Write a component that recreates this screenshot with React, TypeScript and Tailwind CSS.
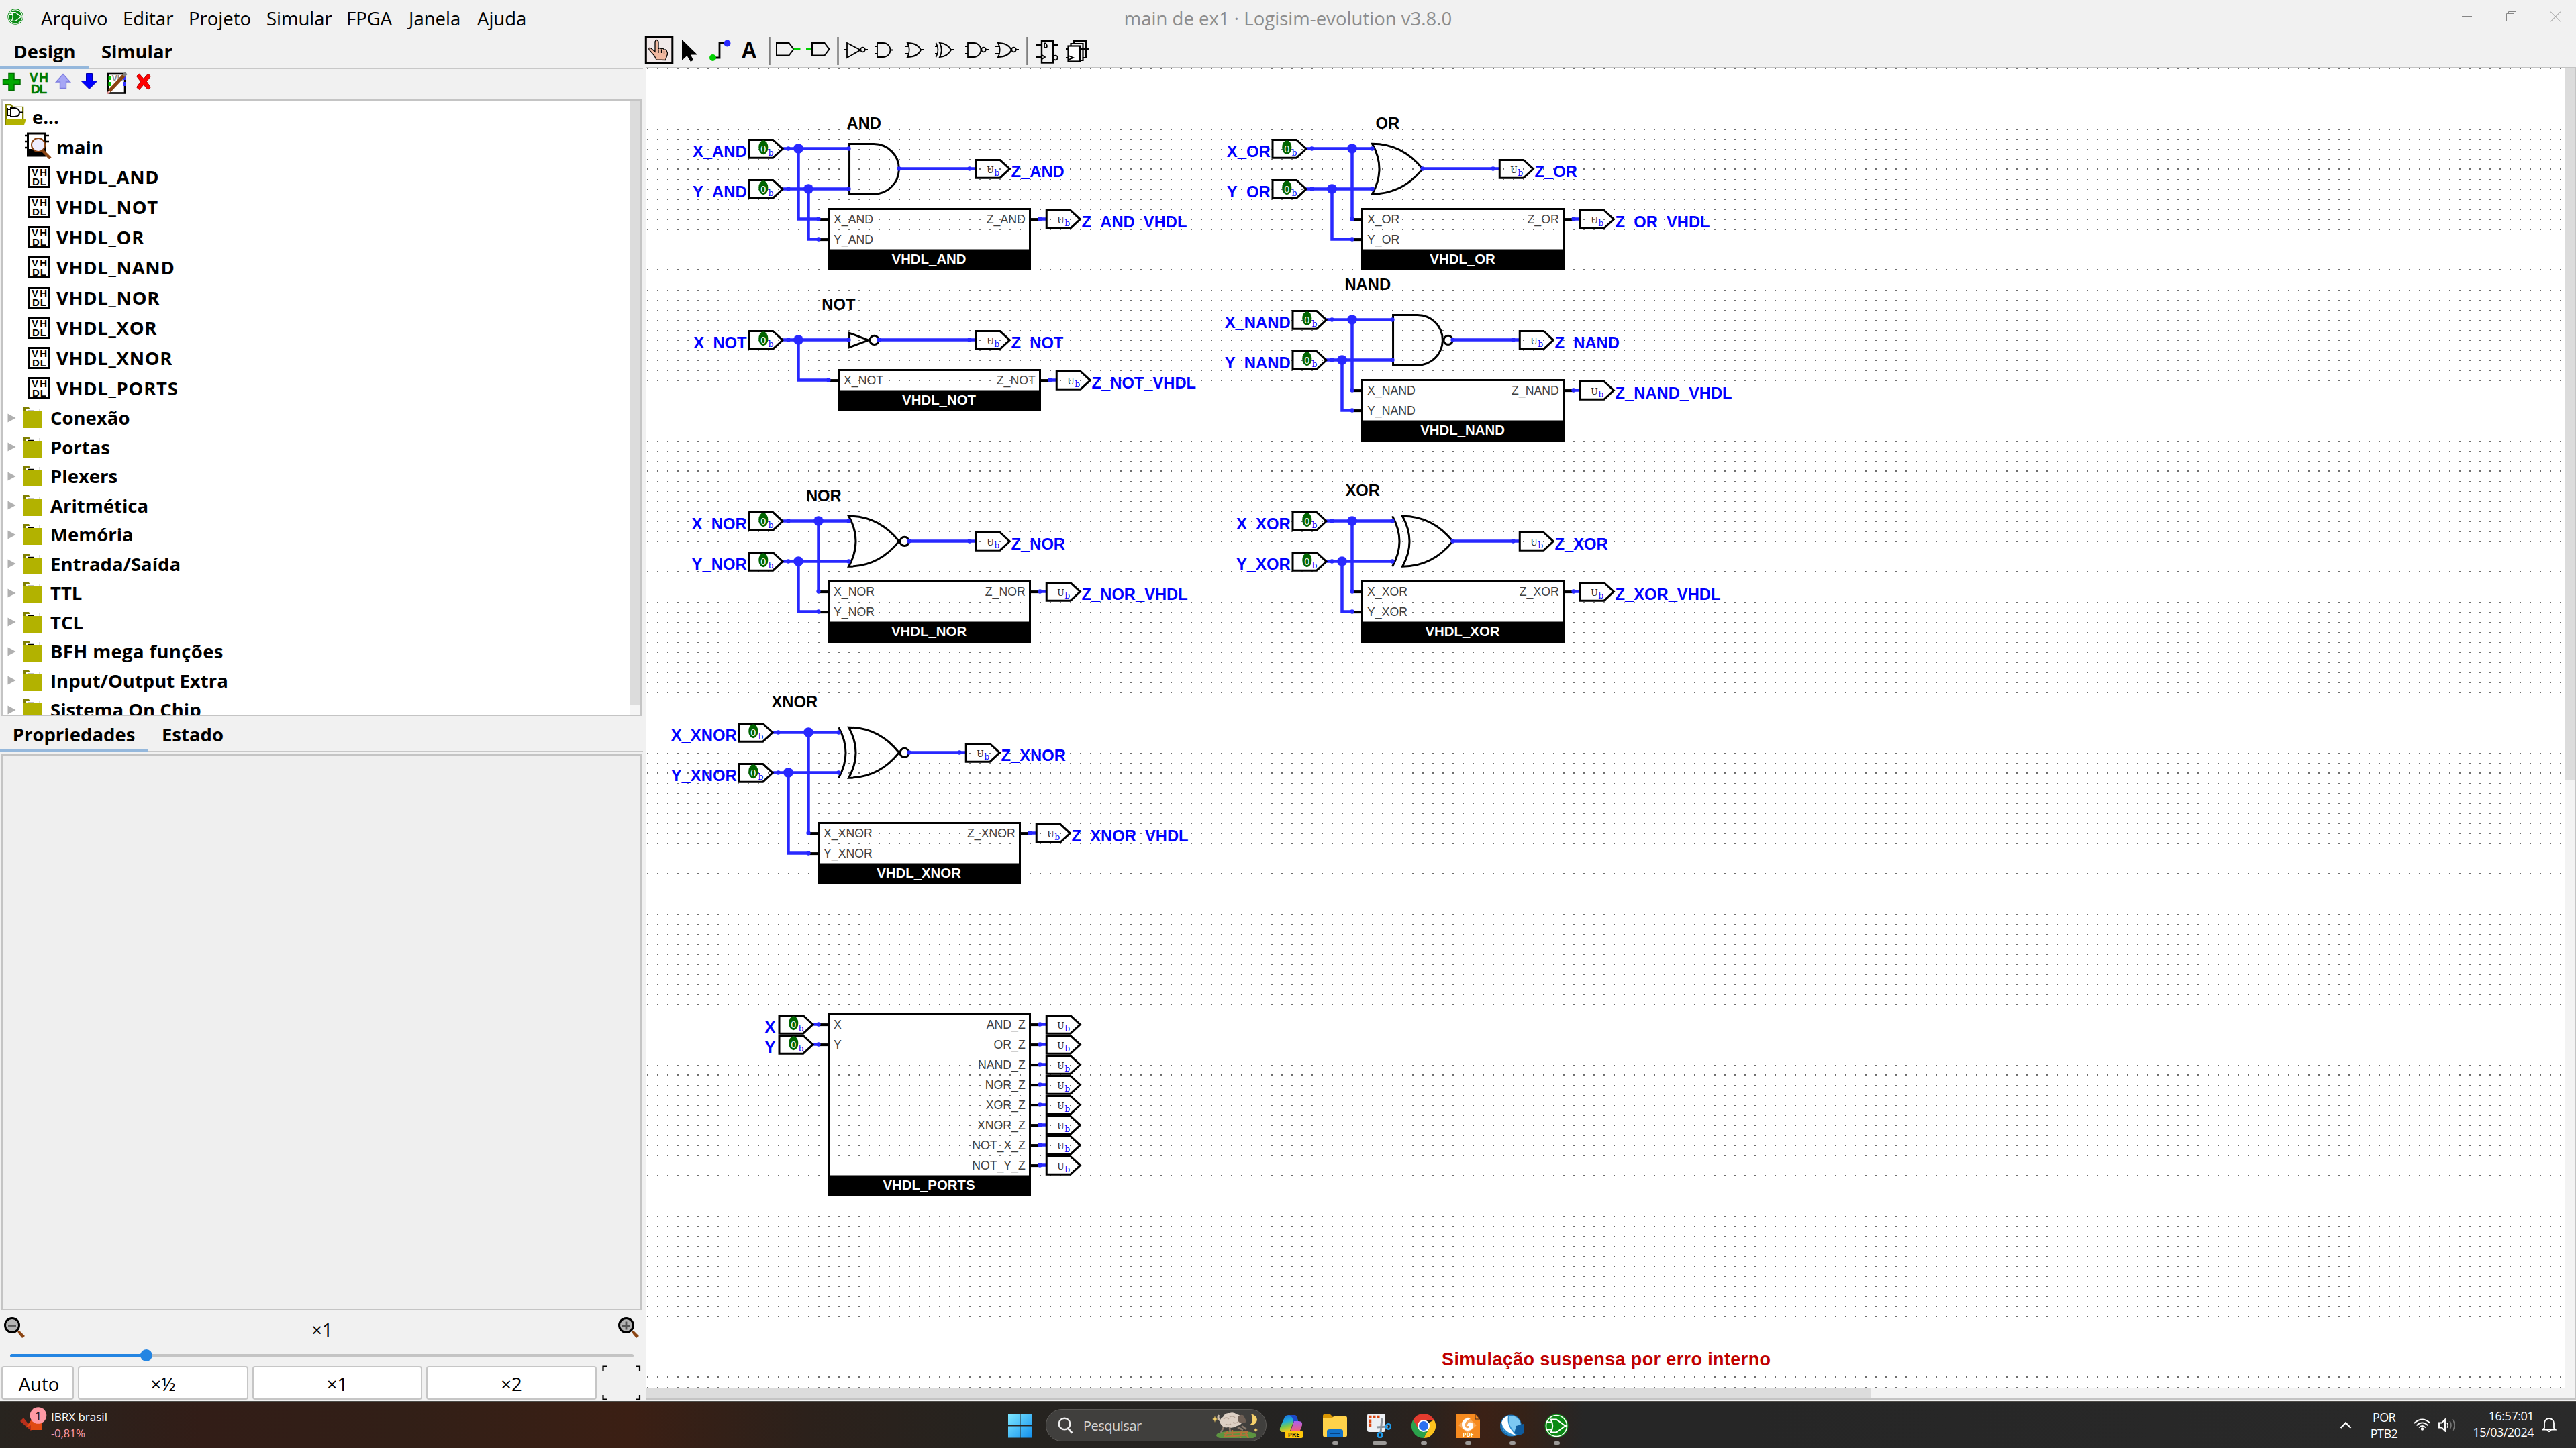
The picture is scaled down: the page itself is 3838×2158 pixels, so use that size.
import React from "react";

const MENUS: [string, string][] = [
  ["Arquivo", "w-[122px]"],
  ["Editar", "w-[98px]"],
  ["Projeto", "w-[116px]"],
  ["Simular", "w-[119px]"],
  ["FPGA", "w-[93px]"],
  ["Janela", "w-[102px]"],
  ["Ajuda", "w-[90px]"],
];
const CIRCUITS = ["VHDL_AND", "VHDL_NOT", "VHDL_OR", "VHDL_NAND", "VHDL_NOR", "VHDL_XOR", "VHDL_XNOR", "VHDL_PORTS"];
const LIBS = ["Conexão", "Portas", "Plexers", "Aritmética", "Memória", "Entrada/Saída", "TTL", "TCL", "BFH mega funções", "Input/Output Extra", "Sistema On Chip"];

const BLUE = "#2828ff";
const SANS = "'Liberation Sans', Arial, sans-serif";
const SERIF = "'DejaVu Serif', serif";

/* ---------- schematic primitives (10 units = one grid step) ---------- */

function Wire({ d }: { d: string }) {
  return <path d={d} fill="none" stroke={BLUE} strokeWidth={3} />;
}
function Joint({ x, y }: { x: number; y: number }) {
  return <circle cx={x} cy={y} r={4.9} fill={BLUE} />;
}
function End({ x, y }: { x: number; y: number }) {
  return <circle cx={x} cy={y} r={2.1} fill={BLUE} />;
}
function Title({ x, y, children }: { x: number; y: number; children: string }) {
  return (
    <text x={x} y={y} fontFamily={SANS} fontWeight={700} fontSize={15.85} fill="#000">
      {children}
    </text>
  );
}
function InPin({ x, y, label, dx = 0 }: { x: number; y: number; label: string; dx?: number }) {
  return (
    <g>
      <path d={`M${x - 6} ${y}H${x}`} stroke={BLUE} strokeWidth={3} />
      <path d={`M${x - 39} ${y - 8.7}h23.8L${x - 5.6} ${y + 0.2}l-9.6 8.9h-23.8z`} fill="none" stroke="#000" strokeWidth={2} />
      <ellipse cx={x - 24.8} cy={y - 1.2} rx={4.7} ry={7} fill="#006400" />
      <text x={x - 24.8} y={y + 3.8} fontFamily={SERIF} fontSize={9} fill="#fff" textAnchor="middle">
        0
      </text>
      <text x={x - 17.2} y={y + 7.2} fontFamily={SERIF} fontSize={8} fill="#0000ff" textAnchor="middle">
        b
      </text>
      <End x={x} y={y} />
      <text x={x - 41.2 + dx} y={y + 8.3} fontFamily={SANS} fontWeight={700} fontSize={15.9} fill="#0000ff" textAnchor="end">
        {label}
      </text>
    </g>
  );
}
function OutPin({ x, y, label }: { x: number; y: number; label?: string }) {
  return (
    <g>
      <path d={`M${x} ${y}h6.5`} stroke={BLUE} strokeWidth={3} />
      <path d={`M${x + 6.5} ${y - 8.7}h23.8l9.6 8.9l-9.6 8.9h-23.8z`} fill="none" stroke="#000" strokeWidth={2} />
      <text x={x + 20.7} y={y + 4.4} fontFamily={SERIF} fontSize={8.3} fill="#222" textAnchor="middle">
        U
      </text>
      <text x={x + 27.3} y={y + 7.2} fontFamily={SERIF} fontSize={8} fill="#0000ff" textAnchor="middle">
        b
      </text>
      <End x={x} y={y} />
      {label && (
        <text x={x + 41.4} y={y + 8.3} fontFamily={SANS} fontWeight={700} fontSize={15.82} fill="#0000ff">
          {label}
        </text>
      )}
    </g>
  );
}
function Chip({ x, y, name, ins, outs }: { x: number; y: number; name: string; ins: string[]; outs: string[] }) {
  const body = Math.max(ins.length, outs.length) * 20;
  return (
    <g>
      {ins.map((t, i) => (
        <g key={t}>
          <path d={`M${x - 10} ${y + 10.4 + i * 20}h10`} stroke="#000" strokeWidth={2.7} />
          <text x={x + 5} y={y + 14.1 + i * 20} fontFamily={SANS} fontSize={11.8} fill="#404040">
            {t}
          </text>
        </g>
      ))}
      {outs.map((t, i) => (
        <g key={t}>
          <path d={`M${x + 200} ${y + 10.4 + i * 20}h10`} stroke="#000" strokeWidth={2.7} />
          <text x={x + 195.5} y={y + 14.1 + i * 20} fontFamily={SANS} fontSize={11.8} fill="#404040" textAnchor="end">
            {t}
          </text>
        </g>
      ))}
      <rect x={x} y={y} width={200} height={body + 20} fill="none" stroke="#000" strokeWidth={2} />
      <rect x={x} y={y + body} width={200} height={20} fill="#000" />
      <path d={`M${x + 1} ${y + body}h198`} stroke="#808080" strokeWidth={0.7} />
      <text x={x + 99.7} y={y + body + 14.2} fontFamily={SANS} fontWeight={700} fontSize={13.6} fill="#fff" textAnchor="middle">
        {name}
      </text>
    </g>
  );
}
const G = { fill: "none", stroke: "#000", strokeWidth: 2 };
function AndGate({ x, y }: { x: number; y: number }) {
  return <path d={`M${x + 25} ${y - 24.7}H${x + 0.7}v49.8h24.3a24.9 24.9 0 0 0 0 -49.8z`} {...G} />;
}
function OrGate({ x, y }: { x: number; y: number }) {
  return <path d={`M${x} ${y - 24.9}q30 0 50 25q-20 25 -50 25q14 -25 0 -50z`} {...G} />;
}
function XorBack({ x, y }: { x: number; y: number }) {
  return <path d={`M${x} ${y - 24.9}q14 25 0 50`} {...G} />;
}
function Bubble({ x, y }: { x: number; y: number }) {
  return <circle cx={x} cy={y + 0.3} r={4.4} {...G} />;
}

function Schematic() {
  return (
    <svg className="block" width={2858} height={1967} viewBox="963 102 2858 1967">
      <defs>
        <pattern id="grid" x={964} y={102} width={15} height={150} patternUnits="userSpaceOnUse">
          <path d="M0 -1h2v2h-2z M0 15h2v1h-2z M0 30h2v1h-2z M0 45h2v1h-2z M0 60h2v1h-2z M0 75h2v1h-2z M0 90h2v1h-2z M0 105h2v1h-2z M0 120h2v1h-2z M0 135h2v1h-2z M0 149h2v1h-2z" fill="#6e6e6e" shapeRendering="crispEdges" />
        </pattern>
      </defs>
      <rect x={963} y={102} width={2858} height={1967} fill="#fff" />
      <rect x={964} y={102} width={2857} height={1967} fill="url(#grid)" />
      <g transform="translate(964.5 101.5) scale(1.5)">
        {/* AND */}
        <Title x={198} y={60.3}>AND</Title>
        <AndGate x={200} y={100} />
        <Chip x={180} y={140} name="VHDL_AND" ins={["X_AND", "Y_AND"]} outs={["Z_AND"]} />
        <Wire d="M140 80H201M140 120H201M250 100H320M150 80V150H170M160 120V170H170" />
        <Joint x={150} y={80} /><Joint x={160} y={120} />
        <End x={200} y={80} /><End x={200} y={120} /><End x={250} y={100} /><End x={170} y={150} /><End x={170} y={170} />
        <InPin x={140} y={80} label="X_AND" /><InPin x={140} y={120} label="Y_AND" />
        <OutPin x={320} y={100} label="Z_AND" /><OutPin x={390} y={150} label="Z_AND_VHDL" />

        {/* NOT */}
        <Title x={173.2} y={240.3}>NOT</Title>
        <path d="M200.7 263.2L219.6 270.3L200.7 277.4z" {...G} />
        <Bubble x={225.4} y={270} />
        <Chip x={190} y={300} name="VHDL_NOT" ins={["X_NOT"]} outs={["Z_NOT"]} />
        <Wire d="M140 270H201M230 270H320M150 270V310H180" />
        <Joint x={150} y={270} />
        <End x={200} y={270} /><End x={230} y={270} /><End x={180} y={310} />
        <InPin x={140} y={270} label="X_NOT" />
        <OutPin x={320} y={270} label="Z_NOT" /><OutPin x={400} y={310} label="Z_NOT_VHDL" />

        {/* OR */}
        <Title x={723.3} y={60.3}>OR</Title>
        <OrGate x={720} y={100} />
        <Chip x={710} y={140} name="VHDL_OR" ins={["X_OR", "Y_OR"]} outs={["Z_OR"]} />
        <Wire d="M660 80H721M660 120H721M770 100H840M700 80V150M680 120V170H700" />
        <Joint x={700} y={80} /><Joint x={680} y={120} />
        <End x={720} y={80} /><End x={720} y={120} /><End x={770} y={100} /><End x={700} y={150} /><End x={700} y={170} />
        <InPin x={660} y={80} label="X_OR" /><InPin x={660} y={120} label="Y_OR" />
        <OutPin x={840} y={100} label="Z_OR" /><OutPin x={920} y={150} label="Z_OR_VHDL" />

        {/* NAND */}
        <Title x={692.6} y={220.3}>NAND</Title>
        <AndGate x={740} y={270} />
        <Bubble x={795.4} y={270} />
        <Chip x={710} y={310} name="VHDL_NAND" ins={["X_NAND", "Y_NAND"]} outs={["Z_NAND"]} />
        <Wire d="M680 250H741M680 290H741M800 270H860M700 250V320M690 290V340H700" />
        <Joint x={700} y={250} /><Joint x={690} y={290} />
        <End x={740} y={250} /><End x={740} y={290} /><End x={800} y={270} /><End x={700} y={320} /><End x={700} y={340} />
        <InPin x={680} y={250} label="X_NAND" /><InPin x={680} y={290} label="Y_NAND" />
        <OutPin x={860} y={270} label="Z_NAND" /><OutPin x={920} y={320} label="Z_NAND_VHDL" />

        {/* NOR */}
        <Title x={157.6} y={430.3}>NOR</Title>
        <OrGate x={200} y={470} />
        <Bubble x={255.4} y={470} />
        <Chip x={180} y={510} name="VHDL_NOR" ins={["X_NOR", "Y_NOR"]} outs={["Z_NOR"]} />
        <Wire d="M140 450H201M140 490H201M260 470H320M170 450V520M150 490V540H170" />
        <Joint x={170} y={450} /><Joint x={150} y={490} />
        <End x={200} y={450} /><End x={200} y={490} /><End x={260} y={470} /><End x={170} y={520} /><End x={170} y={540} />
        <InPin x={140} y={450} label="X_NOR" /><InPin x={140} y={490} label="Y_NOR" />
        <OutPin x={320} y={470} label="Z_NOR" /><OutPin x={390} y={520} label="Z_NOR_VHDL" />

        {/* XOR */}
        <Title x={693.3} y={425.3}>XOR</Title>
        <XorBack x={740} y={470} />
        <OrGate x={750} y={470} />
        <Chip x={710} y={510} name="VHDL_XOR" ins={["X_XOR", "Y_XOR"]} outs={["Z_XOR"]} />
        <Wire d="M680 450H741M680 490H741M800 470H860M700 450V520M690 490V540H700" />
        <Joint x={700} y={450} /><Joint x={690} y={490} />
        <End x={740} y={450} /><End x={740} y={490} /><End x={800} y={470} /><End x={700} y={520} /><End x={700} y={540} />
        <InPin x={680} y={450} label="X_XOR" /><InPin x={680} y={490} label="Y_XOR" />
        <OutPin x={860} y={470} label="Z_XOR" /><OutPin x={920} y={520} label="Z_XOR_VHDL" />

        {/* XNOR */}
        <Title x={123.3} y={635}>XNOR</Title>
        <XorBack x={190} y={680} />
        <OrGate x={200} y={680} />
        <Bubble x={255.4} y={680} />
        <Chip x={170} y={750} name="VHDL_XNOR" ins={["X_XNOR", "Y_XNOR"]} outs={["Z_XNOR"]} />
        <Wire d="M130 660H191M130 700H191M260 680H310M160 660V760M140 700V780H160" />
        <Joint x={160} y={660} /><Joint x={140} y={700} />
        <End x={190} y={660} /><End x={190} y={700} /><End x={260} y={680} /><End x={160} y={760} /><End x={160} y={780} />
        <InPin x={130} y={660} label="X_XNOR" /><InPin x={130} y={700} label="Y_XNOR" />
        <OutPin x={310} y={680} label="Z_XNOR" /><OutPin x={380} y={760} label="Z_XNOR_VHDL" />

        {/* Combined ports block */}
        <Chip x={180} y={940} name="VHDL_PORTS" ins={["X", "Y"]} outs={["AND_Z", "OR_Z", "NAND_Z", "NOR_Z", "XOR_Z", "XNOR_Z", "NOT_X_Z", "NOT_Y_Z"]} />
        <InPin x={170} y={950} label="X" dx={-1.5} /><InPin x={170} y={970} label="Y" dx={-1.5} />
        {[0, 1, 2, 3, 4, 5, 6, 7].map((i) => (
          <OutPin key={i} x={390} y={950 + i * 20} />
        ))}
      </g>
      <text x={2148} y={2035} fontFamily={SANS} fontWeight={700} fontSize={27} fill="#c00000" textLength={490}>
        Simulação suspensa por erro interno
      </text>
    </svg>
  );
}

/* ---------- icons ---------- */

function LogisimLogo({ size }: { size: number }) {
  return (
    <svg width={size} height={size} viewBox="0 0 36 36" className="shrink-0">
      <circle cx={18} cy={18} r={17.5} fill="#0a8a14" />
      <circle cx={18} cy={18} r={15.5} fill="none" stroke="#fff" strokeWidth={1.6} />
      <path d="M9.5 8.5H18L31 18L18 27.5H9.5Q15 18 9.5 8.5z" fill="none" stroke="#fff" strokeWidth={2} />
      <path d="M3 12.5h8M3 23.5h8M30 18h4" stroke="#fff" strokeWidth={1.8} />
    </svg>
  );
}
function VhdlIcon() {
  return (
    <svg width={33} height={33} viewBox="0 0 33 33" className="shrink-0">
      <rect x={1.5} y={1.5} width={30} height={30} fill="#fff" stroke="#000" strokeWidth={3} />
      <text x={16.5} y={14.5} fontFamily={SANS} fontWeight={700} fontSize={15} textAnchor="middle" textLength={23}>VH</text>
      <text x={16.5} y={28.5} fontFamily={SANS} fontWeight={700} fontSize={15} textAnchor="middle" textLength={21}>DL</text>
    </svg>
  );
}
function RootIcon() {
  return (
    <svg width={32} height={32} viewBox="0 0 32 32" className="shrink-0">
      <path d="M1 31V1h7l3 4h15v22" fill="#fff" stroke="#808000" strokeWidth={2.5} />
      <rect x={4} y={4} width={21} height={18} fill="#fff" />
      <path d="M3 6v12M3 8h5M3 17h5M8 6h6q7 1 7 6.500q0 6-7 6.500H8zM21 12.500h6" fill="none" stroke="#000" strokeWidth={2} />
      <path d="M1 23h30l-3 8H1z" fill="#b2b200" />
    </svg>
  );
}
function MainIcon() {
  return (
    <svg width={41} height={40} viewBox="0 0 41 40" className="shrink-0">
      <rect x={4.500} y={2} width={26} height={33} fill="#fff" stroke="#000" strokeWidth={3} />
      <rect x={4} y={25} width={27} height={11} fill="#000" />
      <path d="M0 5h5M0 14h5M0 23h5M30 5h6M30 14h6" stroke="#000" strokeWidth={2.500} />
      <path d="M26 27l12 12" stroke="#8b4513" strokeWidth={4.500} />
      <circle cx={20} cy={19} r={10} fill="#eeeeff" stroke="#8b4513" strokeWidth={2} />
    </svg>
  );
}
function FolderIcon() {
  return (
    <svg width={27} height={31} viewBox="0 0 27 31" className="shrink-0">
      <path d="M0 0h8l2 3H3v4H0z" fill="#808000" />
      <path d="M7 5.500h8" stroke="#000" strokeWidth={1.500} />
      <path d="M24 2v5" stroke="#bbb" strokeWidth={1} />
      <rect x={0} y={6} width={27} height={25} fill="#b2b200" />
    </svg>
  );
}
function Magnifier({ plus }: { plus?: boolean }) {
  return (
    <svg width={32} height={32} viewBox="0 0 32 32" className="shrink-0">
      <path d="M20 21l3-1l8 8l-4 3l-5-6z" fill="#8b4513" />
      <circle cx={12} cy={12} r={10.500} fill="#b4b4b4" stroke="#000" strokeWidth={3} />
      <path d={plus ? "M6 12.500h12M12 6.500v12" : "M6 12.500h12"} stroke="#555" strokeWidth={2.800} />
    </svg>
  );
}

function CircuitToolbar() {
  const g = { fill: "none", stroke: "#000", strokeWidth: 1.8 };
  return (
    <svg width={700} height={46} viewBox="959 54 700 46" className="block">
      <rect x={962.3} y={55.500} width={39.500} height={39} fill="#f1e9e9" stroke="#000" strokeWidth={3} />
      <path d="M978 89l-3-6l-8-9q-1-4 3-2l6 5V62q2-5 5 0v11q2-3 4.500 0q3-2 4 1.500q3-2 4 2q2 3 0 7l-2 6z" fill="#f0b8a0" stroke="#000" strokeWidth={1.300} />
      <path d="M981 74v5M985.500 74v5M989.500 76v4" stroke="#000" strokeWidth={1.200} />
      <path d="M1016 59v31l7.500-7l5.500 9l4-2.500l-4-8h10z" fill="#000" />
      <path d="M1063 86h9V64h11" fill="none" stroke="#000" strokeWidth={2.800} />
      <circle cx={1062} cy={86} r={5} fill="#00d000" />
      <circle cx={1083.500} cy={64.500} r={5} fill={BLUE} />
      <text x={1116} y={86} fontFamily={SANS} fontWeight={700} fontSize={33} textAnchor="middle" textLength={23} lengthAdjust="spacingAndGlyphs">A</text>
      <path d="M1146.500 55v42M1248.500 55v42M1530.500 55v42" stroke="#808080" strokeWidth={2.600} />
      <path d="M1157 64h18.500l7 9.300l-7 9.300H1157z" fill="none" stroke="#000" strokeWidth={2} />
      <path d="M1182.500 73.500h10M1201 73.500h10.500" stroke="#00d000" strokeWidth={3} />
      <path d="M1210 64h18.500l7 9.300l-7 9.300H1210z" fill="none" stroke="#000" strokeWidth={2} />
      <path d="M1262 64v22l20-11.500zM1258 74h4M1289 74h4" {...g} />
      <circle cx={1285.500} cy={74} r={3.300} {...g} />
      <path d="M1307 64h9a10.500 10.500 0 0 1 0 21h-9zM1303 69h4M1303 80h4M1327 74.500h4" {...g} />
      <path d="M1352 64q15 0 20 10.500q-5 10.500-20 10.500q5.500-10.500 0-21zM1348 69h6M1348 80h6M1372 74h4" {...g} />
      <path d="M1400 64q12 1 17 10.500q-5 9.500-17 10.500q5.500-10.500 0-21zM1394.500 64q6 10.500 0 21M1393 69h4M1393 80h4M1417 74h4" {...g} />
      <path d="M1442 64h9a10.500 10.500 0 0 1 0 21h-9zM1438 69h4M1438 80h4M1469 74h4" {...g} />
      <circle cx={1465.500} cy={74} r={3.300} {...g} />
      <path d="M1487 64q15 0 20 10.500q-5 10.500-20 10.500q5.500-10.500 0-21zM1483 69h6M1483 80h6M1514 74h4" {...g} />
      <circle cx={1510.500} cy={74} r={3.300} {...g} />
      <rect x={1552} y={61} width={17} height={32.500} {...g} strokeWidth={2.400} />
      <path d="M1543 67h9M1543 85h9M1569 67h7M1556 64.500v6.500h2q4-1 0-6.500zM1552.500 82l4.500 3l-4.500 3" {...g} />
      <circle cx={1572.500} cy={86} r={3.300} {...g} />
      <path d="M1600 65v-4h18v25h-4M1595.500 69v-4h18v25h-4" {...g} strokeWidth={2.200} />
      <rect x={1591.500} y={68.500} width={17.500} height={23} fill="#fff" stroke="#000" strokeWidth={2.200} />
      <path d="M1588 73h4M1588 86h4M1609 73h13M1592 83l7 3l-7 3" {...g} />
    </svg>
  );
}

function ExplorerToolbar() {
  return (
    <svg width={240} height={45} viewBox="0 103 240 45" className="block">
      <path d="M13 109.500h8v9h9v7h-9v9h-8v-9H4.500v-7H13z" fill="#00a800" stroke="#006d00" strokeWidth={1.500} />
      <text x={58} y={121.500} fontFamily={SANS} fontSize={19} fill="#007a00" textAnchor="middle" textLength={28} stroke="#007a00" strokeWidth={0.500}>VH</text>
      <text x={58} y={139} fontFamily={SANS} fontSize={19} fill="#007a00" textAnchor="middle" textLength={24} stroke="#007a00" strokeWidth={0.500}>DL</text>
      <path d="M94 110.500l10.500 11.500h-6v9.500h-9V122h-6z" fill="#a6a6f5" stroke="#7d7de0" strokeWidth={1.400} />
      <path d="M133 132.500l-12-12h7.500v-11h9v11h7.500z" fill="#0000ff" stroke="#0000a8" strokeWidth={1} />
      <rect x={161} y={110} width={25} height={28.500} fill="#fff" stroke="#000" strokeWidth={2.600} />
      <text x={175} y={121} fontFamily={SANS} fontSize={12} fill="#888" textAnchor="middle">VH</text>
      <path d="M163.500 114v5M163.500 122v6" stroke="#00c800" strokeWidth={4} />
      <path d="M185.500 114v5M185.500 122v6" stroke="#3333ff" strokeWidth={4} />
      <path d="M163 135.500L186 111" stroke="#8b4513" strokeWidth={5} />
      <path d="M184 113l4-4" stroke="#808080" strokeWidth={5} />
      <path d="M159 140.500l2-5l4 3z" fill="#f0a0a0" />
      <path d="M203.500 113.500l4-3.500l6.500 7.500l6.500-7.500l4 3.500l-6 8l6 8.500l-4 3.500l-6.500-7.500l-6.500 7.500l-4-3.500l6-8.500z" fill="#ff0000" stroke="#a80000" strokeWidth={1} />
    </svg>
  );
}

function Tab({ label, active, cls }: { label: string; active?: boolean; cls: string }) {
  return (
    <div className={`${cls} flex items-center justify-center border-b-[4px] ${active ? "border-[#95b8dc]" : "border-transparent"}`}>
      {label}
    </div>
  );
}

function LeftPanel() {
  return (
    <div className="flex h-full w-[958px] shrink-0 flex-col font-bold">
      <div className="flex h-[49px] w-full shadow-[inset_0_-2px_0_#c8c8c8]">
        <Tab label="Design" active cls="w-[133px]" />
        <Tab label="Simular" cls="w-[142px]" />
      </div>
      <ExplorerToolbar />
      <div className="ml-[2px] flex h-[919px] w-[954px] border-2 border-[#c4c4c4] bg-white">
        <div className="flex flex-1 flex-col overflow-hidden pt-[1px]">
          <div className="flex h-[45px] shrink-0 items-center gap-2 pl-[4px]">
            <div className="relative -top-[3px]"><RootIcon /></div>
            <span className="pt-[2px]">e...</span>
          </div>
          <div className="flex h-[45px] shrink-0 items-center gap-[6px] pl-[33px]">
            <div className="relative -top-[2px]"><MainIcon /></div>
            <span className="pt-[1px]">main</span>
          </div>
          {CIRCUITS.map((c) => (
            <div key={c} className="flex h-[45px] shrink-0 items-center gap-[9px] pl-[38px]">
              <VhdlIcon />
              <span className="tracking-[0.7px]">{c}</span>
            </div>
          ))}
          {LIBS.map((c) => (
            <div key={c} className="flex h-[43.5px] shrink-0 items-center pl-[7px]">
              <svg width={13} height={14} viewBox="0 0 13 14"><path d="M0.500 0.500L12.500 7L0.500 13.500z" fill="#b0b0b0" /></svg>
              <div className="ml-[11px] mr-[13px]"><FolderIcon /></div>
              <span className={c.startsWith("BFH") ? "tracking-[0.35px]" : ""}>{c}</span>
            </div>
          ))}
        </div>
        <div className="w-[15px] bg-[#f5f5f5]">
          <div className="h-[901px] bg-[#dcdcdc]" />
        </div>
      </div>
      <div className="flex h-[54px] w-full shadow-[inset_0_-2px_0_#c8c8c8]">
        <Tab label="Propriedades" active cls="w-[220px] pt-[4px]" />
        <Tab label="Estado" cls="w-[134px] pt-[4px]" />
      </div>
      <div className="ml-[2px] mt-[3px] h-[829px] w-[954px] border-2 border-[#c4c4c4] bg-[#efefef]" />
      <div className="flex h-[52px] items-center justify-between pl-[6px] pr-[5px] font-normal">
        <Magnifier />
        <span className="pl-px pt-[4px]">×1</span>
        <Magnifier plus />
      </div>
      <div className="flex h-[30px] items-center pl-[15px] pr-[14px]">
        <div className="h-[5px] w-[195px] rounded-l-full bg-[#2485e2]" />
        <div className="-mx-px size-[18px] rounded-full bg-[#2485e2]" />
        <div className="h-[5px] flex-1 rounded-r-full bg-[#c4c4c4]" />
      </div>
      <div className="flex h-[52px] items-center gap-[6px] pl-[2px] font-normal">
        <div className="flex h-[50px] w-[108px] items-center justify-center rounded-[4px] border-2 border-[#c6c6c6] bg-white pl-[4px] pt-[2px]">Auto</div>
        <div className="flex h-[50px] w-[254px] items-center justify-center rounded-[4px] border-2 border-[#c6c6c6] bg-white pt-[2px]">×½</div>
        <div className="flex h-[50px] w-[253px] items-center justify-center rounded-[4px] border-2 border-[#c6c6c6] bg-white pt-[2px]">×1</div>
        <div className="flex h-[50px] w-[254px] items-center justify-center rounded-[4px] border-2 border-[#c6c6c6] bg-white pt-[2px]">×2</div>
        <svg width={58} height={52} viewBox="0 0 58 52" className="ml-[2px]">
          <path d="M1.500 8V1.500h6M50 1.500h6V8M1.500 44v6.500h6M50 50.500h6V44" fill="none" stroke="#000" strokeWidth={2.200} />
        </svg>
      </div>
    </div>
  );
}

/* ---------- taskbar ---------- */

function TaskIcon({ children, run, left }: { children: React.ReactNode; run?: "dot" | "bar"; left?: string }) {
  return (
    <div className={`flex w-[36px] shrink-0 flex-col items-center pt-[17px] ${left ?? "ml-[30px]"}`}>
      {children}
      {run && <div className={`mt-[5px] h-[5px] rounded-full bg-[#9c9a98] ${run === "bar" ? "w-[21px]" : "w-[9px]"}`} />}
    </div>
  );
}

function Taskbar() {
  return (
    <div className="flex h-[70px] w-full border-t-2 border-[#4b4945] bg-[linear-gradient(90deg,#28241f_0px,#321d17_300px,#321f17_600px,#3b1f14_940px,#2c211b_1200px,#26231f_1460px,#242322_2000px,#2b221d_2130px,#3b2116_2210px,#352218_2270px,#262626_2360px,#262626_2600px,#2a2a2a_3838px)] text-white">
      <div className="flex w-[1502px] pl-[29px]">
        <svg width={42} height={42} viewBox="0 0 42 42" className="mt-[6px]">
          <path d="M1 22l5-5l7 9l8-10l7 7l-11 13z" fill="#b8301c" />
          <path d="M9 32l12-16l13 2v17H17v-7z" fill="#e04a12" />
          <circle cx={28} cy={13.500} r={12.300} fill="#ff99a4" />
          <text x={28} y={20} fontFamily="'Open Sans', sans-serif" fontSize={17} textAnchor="middle" fill="#111">1</text>
        </svg>
        <div className="ml-[5px] mt-[10px] flex flex-col text-[17px] leading-[24px]">
          <span>IBRX brasil</span>
          <span className="tracking-[-0.4px] text-[#ff99a4]">-0,81%</span>
        </div>
      </div>
      <TaskIcon left="ml-0">
        <svg width={36} height={36} viewBox="0 0 36 36">
          <defs>
            <linearGradient id="win" x1="0" y1="0" x2="1" y2="1"><stop offset="0" stopColor="#7fe9ff" /><stop offset="1" stopColor="#1290ee" /></linearGradient>
          </defs>
          <path d="M0 0h17v17H0zM18.500 0H35.500v17H18.500zM0 18.500h17v17H0zM18.500 18.500h17v17h-17z" fill="url(#win)" />
        </svg>
      </TaskIcon>
      <div className="ml-[20px] mt-[10px] flex h-[48px] w-[329px] items-center rounded-full border border-[#5c5a57] bg-[#403f3d] pl-[17px] text-[20px] text-[#d6d4d2]">
        <svg width={24} height={25} viewBox="0 0 24 25"><circle cx={10} cy={10} r={8.300} fill="none" stroke="#eee" strokeWidth={2.400} /><path d="M15 16.500l6.500 7" stroke="#eee" strokeWidth={2.800} /></svg>
        <span className="ml-[14px] w-[192px] tracking-[-0.5px]">Pesquisar</span>
        <svg width={70} height={38} viewBox="0 0 70 38">
          <ellipse cx={36} cy={34} rx={30} ry={7} fill="#5c9440" />
          <path d="M18 20l-5 10M26 22l1 9M38 22l8 4M44 20l7 5" stroke="#8a7a6c" strokeWidth={2.600} fill="none" />
          <path d="M18 37l5-9M30 37v-11M42 38l2-11M54 38l-5-10M18 31l36-2M20 36l34-3" stroke="#b5713a" strokeWidth={2.400} />
          <path d="M12 16q-1-7 4-9q3-7 10-6q6-2 11 2q8 1 8 8q0 8-8 9q-6 4-13 2q-8 2-12-6z" fill="#dccfc4" />
          <path d="M17 10q4-4 8 0M26 7q5-3 8 1M20 17q4 3 8 0M31 15q4 2 8-1" stroke="#b3a294" strokeWidth={1.500} fill="none" />
          <path d="M38 6q8-5 10 1l3 6q-1 3-5 2q-6 2-8-4z" fill="#6e5f55" />
          <path d="M12 12q-5-3-2-8" stroke="#cbbcae" strokeWidth={3} fill="none" />
          <path d="M58 2q9 3 9 9q-1 8-11 8q7-6 2-17z" fill="#f4cf6a" />
          <path d="M4 5l1 4l4 1l-4 1l-1 4l-1-4l-3-1l3-1zM65 23l1 2l2 1l-2 1l-1 2l-1-2l-2-1l2-1z" fill="#f4cf6a" />
        </svg>
      </div>
      <TaskIcon left="ml-[19px]">
        <svg width={36} height={36} viewBox="0 0 36 36">
          <defs>
            <linearGradient id="cpa" x1="0" y1="0" x2="0.300" y2="1"><stop offset="0" stopColor="#1a5fe0" /><stop offset="0.450" stopColor="#22b0d8" /><stop offset="0.700" stopColor="#7bc84a" /><stop offset="1" stopColor="#f2c81e" /></linearGradient>
            <linearGradient id="cpb" x1="0" y1="0" x2="0" y2="1"><stop offset="0" stopColor="#a860f0" /><stop offset="1" stopColor="#f0607a" /></linearGradient>
          </defs>
          <path d="M8 5Q10 2 14 2h8q4 0 5 5l1 5h-7l-4 11q-1 4-5 4H5q-5 0-4-6z" fill="url(#cpa)" />
          <path d="M15 2h7q4 0 5 5l1 5h-7q-1-8-6-10z" fill="#1d49c8" />
          <path d="M22 11h7q6 0 5 6l-3 8H17z" fill="url(#cpb)" />
          <rect x={8} y={25} width={27} height={11} rx={2} fill="#ffc80a" />
          <text x={21.500} y={34} fontFamily="'Open Sans', sans-serif" fontWeight={700} fontSize={9.500} textAnchor="middle" fill="#111">PRE</text>
        </svg>
      </TaskIcon>
      <TaskIcon run="dot" left="ml-[29px]">
        <svg width={36} height={36} viewBox="0 0 36 36">
          <path d="M0 3q0-2 2-2h9l4 4v5H0z" fill="#d99500" />
          <path d="M0 7h13l3-3h18q2 0 2 2v26q0 2-2 2H2q-2 0-2-2z" fill="#ffd24a" />
          <path d="M6 34v-8q0-3 4-3h16q4 0 4 3v8z" fill="#1272ca" />
          <path d="M11 29h14" stroke="#083c78" strokeWidth={1.800} />
        </svg>
      </TaskIcon>
      <TaskIcon run="bar">
        <svg width={36} height={36} viewBox="0 0 36 36">
          <rect x={0} y={0} width={27} height={27} rx={3} fill="#eceff3" />
          <path d="M4.500 19V4.500h15" fill="none" stroke="#d9440f" strokeWidth={3.500} strokeDasharray="4.500 1.500" />
          <path d="M22 7l-2 21M14 20l17-1" stroke="#8d949b" strokeWidth={3} />
          <circle cx={31.500} cy={19} r={3.700} fill="none" stroke="#1f9bea" strokeWidth={2.600} />
          <circle cx={19} cy={31.500} r={3.500} fill="none" stroke="#1f9bea" strokeWidth={2.600} />
        </svg>
      </TaskIcon>
      <TaskIcon run="dot">
        <svg width={36} height={36} viewBox="0 0 36 36">
          <path d="M18 18V36A18 18 0 0 1 2.400 9z" fill="#2ba24c" />
          <path d="M18 18L33.600 9A18 18 0 0 1 18 36l7.800-13.500z" fill="#fcc31e" />
          <path d="M10.200 22.500L18 36l7.800-13.500z" fill="#2ba24c" />
          <path d="M2.400 9L10.200 22.500L10 14L18 9H33.600A18 18 0 0 0 2.400 9z" fill="#e33b2e" />
          <circle cx={18} cy={18} r={9} fill="#fff" />
          <circle cx={18} cy={18} r={7} fill="#2a6ff0" />
        </svg>
      </TaskIcon>
      <TaskIcon run="dot">
        <svg width={36} height={36} viewBox="0 0 36 36">
          <path d="M0 0h28l8 8v28H0z" fill="#f68a1f" />
          <path d="M18 5l13 12l-13 12l-14-12z" fill="#f9a95a" />
          <path d="M29 0v8h7z" fill="#f68a1f" stroke="#40251a" strokeWidth={1} />
          <path d="M26 6Q8 5 9 17q1 8 9 8q8-1 8-8q-1-5-7-4l-3 5h4q0 4-4 3q-3-2-2-6q2-7 12-9z" fill="#fff" />
          <text x={18.500} y={34} fontFamily="'Open Sans', sans-serif" fontWeight={700} fontSize={8.500} textAnchor="middle" fill="#fff">PDF</text>
        </svg>
      </TaskIcon>
      <TaskIcon run="dot">
        <svg width={36} height={36} viewBox="0 0 36 36">
          <circle cx={16} cy={17.500} r={16} fill="#1c6fb0" />
          <circle cx={17} cy={17} r={13.800} fill="#7cc8f2" />
          <path d="M3 12Q7 3 14 2Q10 20 27 31Q20 35 14 32Q2 25 3 12z" fill="#2f8fd0" />
          <path d="M2 13Q5 5 12 3Q9 19 24 32Q6 28 2 13z" fill="#fff" />
          <path d="M24 18l11-3v14l-6 3l-8-3z" fill="#0f5c9e" />
        </svg>
      </TaskIcon>
      <TaskIcon run="dot"><LogisimLogo size={36} /></TaskIcon>
      <div className="ml-auto flex text-[18px] leading-[23.5px]">
        <svg width={18} height={12} viewBox="0 0 18 12" className="mt-[28px]"><path d="M1.500 10L9 2.500L16.500 10" fill="none" stroke="#fff" strokeWidth={2.300} /></svg>
        <div className="ml-[23px] mt-[11px] flex w-[50px] flex-col items-center tracking-[-0.6px]">
          <span>POR</span>
          <span>PTB2</span>
        </div>
        <svg width={26} height={19} viewBox="0 0 26 19" className="ml-[19px] mt-[24px]">
          <g fill="none" stroke="#fff" strokeWidth={1.700}>
            <path d="M1 7Q13-4 25 7M4.500 10.300Q13 2.500 21.500 10.300M8 13.500Q13 8.500 18 13.500" />
          </g>
          <circle cx={13} cy={15.500} r={2.200} fill="#fff" />
        </svg>
        <svg width={26} height={20} viewBox="0 0 26 20" className="ml-[11px] mt-[24px]">
          <path d="M1 6.500h4L10 1.500v17L5 13.500H1z" fill="none" stroke="#fff" strokeWidth={1.900} />
          <path d="M13 6.500q2.500 3.500 0 7" fill="none" stroke="#fff" strokeWidth={1.600} />
          <path d="M17 4q4 6 0 12M21 1q6 9 0 18" fill="none" stroke="#777" strokeWidth={1.600} />
        </svg>
        <div className="mt-[9px] flex w-[116px] flex-col items-end tracking-[-0.5px]">
          <span>16:57:01</span>
          <span>15/03/2024</span>
        </div>
        <svg width={22} height={23} viewBox="0 0 22 23" className="ml-[12px] mr-[29px] mt-[22px]">
          <path d="M4 16V9a7 7 0 0 1 14 0v7l2.500 2.500H1.500zM8 19.500q3 3.500 6 0" fill="none" stroke="#fff" strokeWidth={1.800} />
        </svg>
      </div>
    </div>
  );
}

export default function App() {
  return (
    <div className="flex h-[2158px] w-[3838px] flex-col overflow-hidden bg-[#f1f1f1] font-['Open_Sans',sans-serif] text-[27.5px] leading-[45px] text-black">
      <div className="grid h-[54px] grid-cols-[1fr_auto_1fr] items-center">
        <div className="flex items-center pl-[11px]">
          <div className="relative -top-[2px]"><LogisimLogo size={24} /></div>
          <div className="ml-[26px] flex">
            {MENUS.map(([m, w]) => (
              <span key={m} className={`${w} shrink-0`}>{m}</span>
            ))}
          </div>
        </div>
        <span className="tracking-[0.03px] text-[#8c8c8c]">main de ex1 · Logisim-evolution v3.8.0</span>
        <svg width={150} height={18} viewBox="0 0 150 18" className="relative -top-[2px] mr-[21px] justify-self-end">
          <g fill="none" stroke="#868686" strokeWidth={1}>
            <path d="M1 8.500h15" />
            <path d="M67.500 4.500h11v11h-11zM70.500 4.500v-3h11v11h-3" />
            <path d="M133 1.500l15 15M148 1.500l-15 15" />
          </g>
        </svg>
      </div>
      <div className="flex h-[2034px]">
        <LeftPanel />
        <div className="flex flex-1 flex-col pl-px">
          <CircuitToolbar />
          <div className="ml-[3px] flex h-[1986px] flex-col border-l border-r-2 border-t-2 border-b-2 border-[#c4c4c4]">
            <div className="flex">
              <Schematic />
              <div className="w-[15px] flex-1 bg-[#f3f3f3]"><div className="h-[1060px] bg-[#dcdcdc]" /></div>
            </div>
            <div className="flex-1 bg-[#f3f3f3]"><div className="h-full w-[1825px] bg-[#dcdcdc]" /></div>
          </div>
        </div>
      </div>
      <Taskbar />
    </div>
  );
}
